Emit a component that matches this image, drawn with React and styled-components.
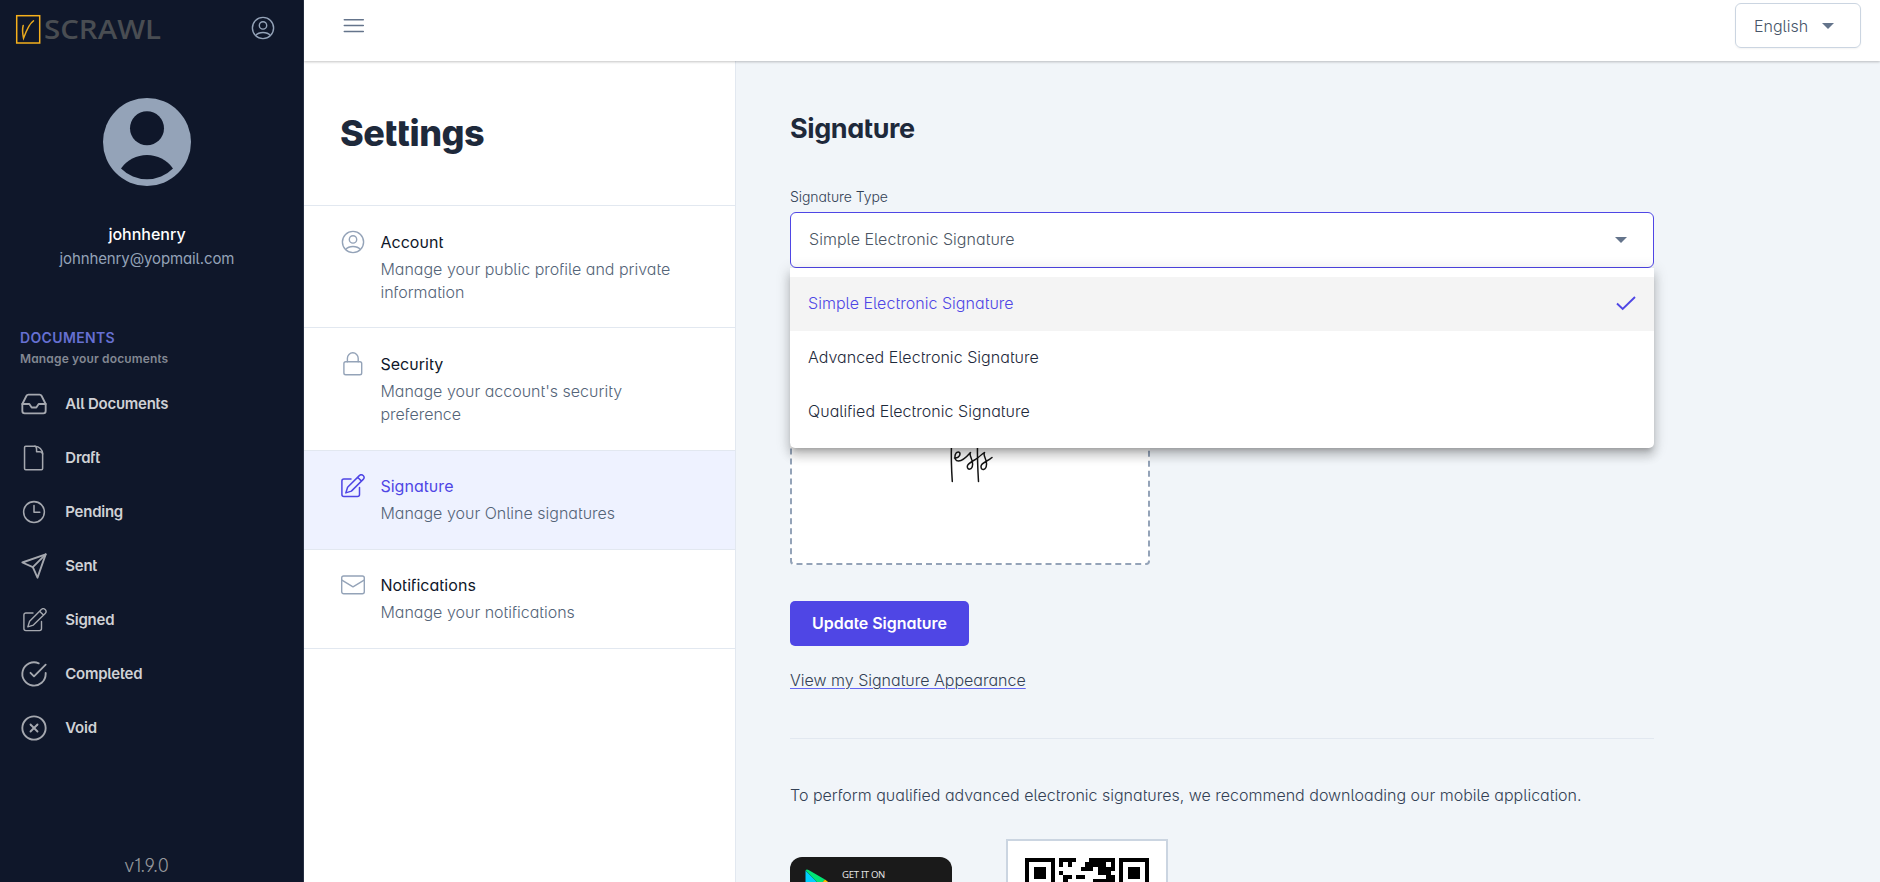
import React from "react";
import styled, { createGlobalStyle, css } from "styled-components";
import { FiInbox, FiSend, FiCheckCircle, FiXCircle } from "react-icons/fi";

const GlobalStyle = createGlobalStyle`
  *, *::before, *::after { box-sizing: border-box; }
  body {
    margin: 0;
    overflow: hidden;
    font-family: Inter, "Liberation Sans", sans-serif;
    font-feature-settings: "salt", "cv11";
    font-size: 16px;
    font-weight: 300;
    line-height: 24px;
    color: #1e293b;
    background: #f1f5f9;
  }
`;

const Layout = styled.div`
  display: flex;
  width: 100%;
  height: 882px;
  overflow: hidden;
`;

const Sidebar = styled.aside`
  display: flex;
  flex-direction: column;
  flex: 0 0 304px;
  background: #0f172a;
  border-right: 1px solid #273043;
`;

const BrandRow = styled.div`
  display: flex;
  justify-content: space-between;
  padding: 14px 28px 0 15px;
  height: 98px;
`;

const LogoMark = styled.svg`
  overflow: visible;
`;

const AccountButton = styled.span`
  padding-top: 1.5px;
  color: #94a3b8;
`;

const Profile = styled.div`
  display: flex;
  flex-direction: column;
  align-items: center;
  padding-right: 9px;
`;

const UserName = styled.div`
  margin-top: 36px;
  font-weight: 500;
  color: #ffffff;
`;

const UserEmail = styled.div`
  padding-top: 1px;
  font-size: 15px;
  line-height: 23px;
  font-weight: 400;
  letter-spacing: -0.12px;
  color: #94a3b8;
`;

const NavHeading = styled.div`
  margin: 58px 0 2px 20px;
  font-size: 14px;
  line-height: 20px;
  font-weight: 600;
  letter-spacing: 0.35px;
  color: #6670d2;
`;

const NavHint = styled.div`
  margin: 0 0 9px 20px;
  font-size: 12px;
  line-height: 18px;
  font-weight: 600;
  letter-spacing: 0.15px;
  color: #838893;
`;

const NavItem = styled.a`
  display: flex;
  align-items: center;
  height: 54px;
  padding-left: 20px;
  gap: 17.3px;
  font-size: 15px;
  font-weight: 600;
  letter-spacing: -0.25px;
  color: #cfd1d5;
  svg { color: #a5a8af; }
`;

const Version = styled.div`
  margin-top: auto;
  padding: 0 10px 4px 0;
  text-align: center;
  font-size: 18px;
  color: #96989c;
`;

const Page = styled.div`
  display: flex;
  flex-direction: column;
  flex: 1;
  min-width: 0;
`;

const TopBar = styled.header`
  position: relative;
  z-index: 1;
  display: flex;
  align-items: flex-start;
  justify-content: space-between;
  flex: 0 0 61px;
  padding: 3px 19px 0 39px;
  background: #ffffff;
  box-shadow: 0 1px 3px rgba(0, 0, 0, 0.12), 0 1px 2px rgba(0, 0, 0, 0.12);
`;

const MenuButton = styled.div`
  padding-top: 15px;
  svg { display: block; }
`;

const LanguageSelect = styled.div`
  display: flex;
  align-items: center;
  width: 126px;
  height: 45px;
  padding: 0 26px 0 18px;
  justify-content: space-between;
  border: 1px solid #cbd5e1;
  border-radius: 6px;
  color: #475569;
  box-shadow: 0 1px 2px rgba(0, 0, 0, 0.05);
`;

const Caret = styled.span`
  border-left: 6px solid transparent;
  border-right: 6px solid transparent;
  border-top: 6px solid #64748b;
`;

const Body = styled.div`
  display: flex;
  flex: 1;
  min-height: 0;
`;

const SettingsPanel = styled.section`
  flex: 0 0 432px;
  background: #ffffff;
  border-right: 1px solid #e2e8f0;
`;

const SettingsTitle = styled.h1`
  margin: 0;
  height: 144px;
  padding: 50px 0 0 36px;
  font-size: 36px;
  line-height: 44px;
  font-weight: 800;
  letter-spacing: -0.45px;
`;

const SettingsList = styled.div`
  border-bottom: 1px solid #e2e8f0;
`;

const SettingsItem = styled.div`
  display: flex;
  gap: 15px;
  padding: 23.5px 36px 22.9px 37.4px;
  border-top: 1px solid #e2e8f0;
  ${(p) => p.$active && css`background: #eef2ff;`}
  svg {
    flex: none;
    color: ${(p) => (p.$active ? "#4f46e5" : "#94a3b8")};
  }
`;

const ItemTitle = styled.div`
  margin-bottom: 4px;
  font-weight: 400;
  letter-spacing: 0.04px;
  color: ${(p) => (p.$active ? "#4f46e5" : "#0f172a")};
`;

const ItemText = styled.div`
  line-height: 23.5px;
  color: #546478;
`;

const Main = styled.main`
  flex: 1;
  min-width: 0;
  padding: 50px 0 0 54px;
`;

const Content = styled.div`
  width: 864px;
`;

const Title = styled.h2`
  margin: 0;
  font-size: 27px;
  line-height: 36px;
  font-weight: 700;
  letter-spacing: -0.42px;
`;

const FieldLabel = styled.div`
  margin-top: 40px;
  padding-bottom: 5px;
  font-size: 14px;
  line-height: 20px;
  letter-spacing: -0.07px;
  color: #334155;
`;

const SelectWrap = styled.div`
  position: relative;
`;

const SelectBox = styled.div`
  display: flex;
  align-items: center;
  justify-content: space-between;
  height: 56px;
  padding: 0 26px 0 18px;
  background: #ffffff;
  border: 1px solid #4f46e5;
  border-radius: 6px;
  color: #4b5563;
`;

const SelectValue = styled.span`
  padding-bottom: 2px;
  letter-spacing: 0.04px;
`;

const Menu = styled.div`
  position: absolute;
  z-index: 2;
  top: 56px;
  left: 0;
  right: 0;
  padding: 9px 0;
  background: #ffffff;
  border-radius: 0 0 5px 5px;
  box-shadow: 0 5px 5px -3px rgba(0, 0, 0, 0.2), 0 8px 10px 1px rgba(0, 0, 0, 0.14),
    0 3px 14px 2px rgba(0, 0, 0, 0.12);
`;

const Option = styled.div`
  display: flex;
  align-items: center;
  justify-content: space-between;
  height: 54px;
  padding: 0 18px 2px;
  letter-spacing: 0.04px;
  background: ${(p) => (p.$selected ? "#f4f4f4" : "transparent")};
  color: ${(p) => (p.$selected ? "#4f46e5" : "#1e293b")};
`;

const SignatureBox = styled.div`
  display: flex;
  justify-content: center;
  width: 360px;
  height: 180px;
  margin-top: 117px;
  padding-top: 33px;
  background: #ffffff;
  border: 2px dashed #94a3b8;
  border-radius: 4px;
`;

const UpdateButton = styled.button`
  display: block;
  width: 179px;
  height: 45px;
  margin-top: 36px;
  padding: 0 0 2px;
  border: 0;
  border-radius: 5px;
  background: #4f46e5;
  color: #ffffff;
  font: inherit;
  font-feature-settings: inherit;
  font-weight: 600;
  letter-spacing: -0.03px;
`;

const AppearanceLink = styled.a`
  display: inline-block;
  margin-top: 22px;
  color: #334155;
  text-decoration: underline;
  text-decoration-color: #6366f1;
  text-decoration-thickness: 1px;
  text-underline-offset: 2px;
`;

const Divider = styled.div`
  height: 1px;
  margin-top: 46px;
  background: #e2e8f0;
`;

const Note = styled.p`
  margin: 44px 0 0;
  color: #334155;
  white-space: nowrap;
`;

const Downloads = styled.div`
  display: flex;
  gap: 54px;
  margin-top: 32px;
`;

const StoreBadge = styled.div`
  display: flex;
  width: 162px;
  height: 49px;
  margin-top: 18px;
  padding: 12px 0 0 15px;
  gap: 10px;
  background: #1a1a1a;
  border-radius: 12px;
`;

const BadgeText = styled.div`
  color: #e8e8e8;
  font-family: "Open Sans", sans-serif;
  font-weight: 400;
  font-size: 9.6px;
  line-height: 11px;
  letter-spacing: -0.3px;
  white-space: nowrap;
`;

const BadgeName = styled.div`
  padding-left: 2px;
  font-size: 18px;
  line-height: 20px;
  letter-spacing: -0.8px;
  color: #ffffff;
`;

const QrFrame = styled.div`
  width: 162px;
  height: 162px;
  padding: 17px;
  background: #ffffff;
  border: 2px solid #cbd5e1;
`;

const Stroke = ({ size = 24, width = 1.4, children }) => (
  <svg width={size} height={size} viewBox="0 0 24 24" fill="none" stroke="currentColor"
    strokeWidth={width} strokeLinecap="round" strokeLinejoin="round">
    {children}
  </svg>
);

const UserCircle = () => (
  <Stroke>
    <circle cx="12" cy="12" r="10.6" />
    <circle cx="12" cy="9.4" r="3.7" />
    <path d="M4.7 19.4C8 15.5 16 15.5 19.3 19.4" />
  </Stroke>
);

const Lock = () => (
  <Stroke>
    <rect x="2.9" y="9.7" width="17.8" height="13" rx="1.8" />
    <path d="M6.4 9.7V6.2a5.4 5.4 0 0 1 10.8 0v3.5" />
  </Stroke>
);

const Pencil = ({ size, width = 1.5 }) => (
  <Stroke size={size} width={width}>
    <path d="M10 5H2.9A2 2 0 0 0 .9 7v13.6a2 2 0 0 0 2 2h13.6a2 2 0 0 0 2-2V13.4" />
    <path d="M18.3 1.6 6.6 13.3 4.8 18.9l5.6-1.8L22.2 5.4a2.6 2.6 0 0 0-3.9-3.8zM16.6 3.3l3.9 3.8" />
  </Stroke>
);

const Envelope = () => (
  <Stroke>
    <rect x=".7" y="3" width="22.6" height="17.8" rx="2" />
    <path d="M.9 7.2 12 13.8l11.1-6.6" />
  </Stroke>
);

const DraftPage = () => (
  <Stroke size={28} width={1.3}>
    <path d="M4.9 1.9h8c3.5 0 6.5 3 6.5 6.6v12.6a1 1 0 0 1-1 1H4.9a1 1 0 0 1-1-1V2.9a1 1 0 0 1 1-1z" />
    <path d="M12.6 1.9c1.6 0 1.6 1.2 1.6 2.6v2.2h2.2c1.8 0 3 .2 3 1.8" />
  </Stroke>
);

const Clock = () => (
  <Stroke size={28} width={1.3}>
    <circle cx="12" cy="12" r="8.9" />
    <path d="M12 6.5V12.2h5" />
  </Stroke>
);

const PencilSlot = styled.span`
  display: flex;
  width: 28px;
  padding-left: 2.6px;
`;

const Logo = () => (
  <LogoMark width="150" height="32" viewBox="0 0 150 32">
    <rect x="1.7" y="1.7" width="23" height="27.3" fill="none" stroke="#f5b01c" strokeWidth="1.5" />
    <path d="M8.2 11.5C7.2 15 7.6 20 8.5 24.2C11 17.5 14 9.5 18.5 6.8" fill="none" stroke="#e8a91e"
      strokeWidth="1.5" strokeLinecap="round" />
    <text x="29" y="25.3" fontFamily='"Open Sans", sans-serif' fontSize="27.5" fontWeight="600"
      textLength="117" lengthAdjust="spacingAndGlyphs" fill="#494d52">SCRAWL</text>
  </LogoMark>
);

const Avatar = () => (
  <svg width="88" height="88" viewBox="0 0 88 88">
    <circle cx="44" cy="44" r="44" fill="#94a3b8" />
    <circle cx="44" cy="30.3" r="17" fill="#0f172a" />
    <path d="M18 70.4A32 32 0 0 1 70 70.4A36.7 36.7 0 0 1 18 70.4Z" fill="#0f172a" />
  </svg>
);

const Scribble = () => (
  <svg width="46" height="64" viewBox="0 0 46 64" fill="none" stroke="#151515" strokeWidth="1.5"
    strokeLinecap="round" strokeLinejoin="round">
    <path d="M2 27c8-3 20-5 32-6M4.5 24C4 38 4.5 50 5.3 61.5" />
    <path d="M7.5 38C10 38.5 13 36.5 13 34C13 31.5 9.5 31 8.3 34.5C7.3 38.5 8.5 41 11.5 41C15.5 41 20 36.5 23.5 32.5C21.5 35.5 26 39 25.6 44.5C25.3 50 20.3 50.5 20.3 46.5C20.3 43 26 41.5 30.5 38C33.5 35.5 36 33.5 37.5 32.5C35.5 35.5 40 39 39.5 44.5C39.2 50.5 34 51 34 46.5C34 42.5 40 42 45 37.5" />
    <path d="M30.5 24C30.2 38 30.8 50 31.5 61.5" />
  </svg>
);

const PlayMark = () => (
  <svg width="27" height="32" viewBox="0 0 27 32">
    <path d="M.5 1.5V30L15 16z" fill="#00d0ff" />
    <path d="M.5 1.2C1.5.2 2.7.5 4 1.3L20 10.5 15 16z" fill="#00e676" />
    <path d="M20 10.5 27 16l-7 5.5L15 16z" fill="#ffc400" />
    <path d="M.5 30 15 16l5 5.5L4 30.5z" fill="#ff3a44" />
  </svg>
);

const QR_ROWS = [
  "11111110111100011111101111111",
  "10000010101000111110101000001",
  "10111010000001110111101011101",
  "10111010100000000111001011101",
  "10111010011011000001101011101",
  "10000010010000001111101000001",
  "11111110101010101010101111111",
];

const QrCode = () => (
  <svg width="124" height="124" viewBox="0 0 29 29" shapeRendering="crispEdges">
    {QR_ROWS.map((row, y) =>
      [...row].map((v, x) => v === "1" && <rect key={`${x}-${y}`} x={x} y={y} width="1" height="1" />)
    )}
  </svg>
);

const NAV = [
  ["All Documents", <FiInbox size={28} strokeWidth={1.6} />],
  ["Draft", <DraftPage />],
  ["Pending", <Clock />],
  ["Sent", <FiSend size={28} strokeWidth={1.6} />],
  ["Signed", <PencilSlot><Pencil width={1.4} /></PencilSlot>],
  ["Completed", <FiCheckCircle size={28} strokeWidth={1.6} />],
  ["Void", <FiXCircle size={28} strokeWidth={1.6} />],
];

const SETTINGS = [
  ["Account", "Manage your public profile and private information", <UserCircle />],
  ["Security", "Manage your account's security preference", <Lock />],
  ["Signature", "Manage your Online signatures", <Pencil />, true],
  ["Notifications", "Manage your notifications", <Envelope />],
];

const OPTIONS = [
  "Simple Electronic Signature",
  "Advanced Electronic Signature",
  "Qualified Electronic Signature",
];

export default function App() {
  return (
    <>
      <GlobalStyle />
      <Layout>
        <Sidebar>
          <BrandRow>
            <Logo />
            <AccountButton><UserCircle /></AccountButton>
          </BrandRow>
          <Profile>
            <Avatar />
            <UserName>johnhenry</UserName>
            <UserEmail>johnhenry@yopmail.com</UserEmail>
          </Profile>
          <NavHeading>DOCUMENTS</NavHeading>
          <NavHint>Manage your documents</NavHint>
          <nav>
            {NAV.map(([label, icon]) => (
              <NavItem key={label}>{icon}{label}</NavItem>
            ))}
          </nav>
          <Version>v1.9.0</Version>
        </Sidebar>
        <Page>
          <TopBar>
            <MenuButton>
              <svg width="22" height="16" viewBox="0 0 22 16" stroke="#64748b" strokeWidth="1.5" strokeLinecap="round">
                <path d="M1.3 1.7h19M1.3 7.6h19M1.3 13.5h19" />
              </svg>
            </MenuButton>
            <LanguageSelect>English<Caret /></LanguageSelect>
          </TopBar>
          <Body>
            <SettingsPanel>
              <SettingsTitle>Settings</SettingsTitle>
              <SettingsList>
                {SETTINGS.map(([name, text, icon, active]) => (
                  <SettingsItem key={name} $active={active}>
                    {icon}
                    <div>
                      <ItemTitle $active={active}>{name}</ItemTitle>
                      <ItemText>{text}</ItemText>
                    </div>
                  </SettingsItem>
                ))}
              </SettingsList>
            </SettingsPanel>
            <Main>
              <Content>
                <Title>Signature</Title>
                <FieldLabel>Signature Type</FieldLabel>
                <SelectWrap>
                  <SelectBox>
                    <SelectValue>{OPTIONS[0]}</SelectValue>
                    <Caret />
                  </SelectBox>
                  <Menu>
                    {OPTIONS.map((option, i) => (
                      <Option key={option} $selected={i === 0}>
                        {option}
                        {i === 0 && (
                          <svg width="20" height="15" viewBox="0 0 20 15" fill="none" stroke="#4f46e5" strokeWidth="1.9">
                            <path d="M1 7.5 6.7 13 19 1" />
                          </svg>
                        )}
                      </Option>
                    ))}
                  </Menu>
                </SelectWrap>
                <SignatureBox><Scribble /></SignatureBox>
                <UpdateButton>Update Signature</UpdateButton>
                <AppearanceLink>View my Signature Appearance</AppearanceLink>
                <Divider />
                <Note>
                  To perform qualified advanced electronic signatures, we recommend downloading our mobile application.
                </Note>
                <Downloads>
                  <StoreBadge>
                    <PlayMark />
                    <BadgeText>GET IT ON<BadgeName>Google Play</BadgeName></BadgeText>
                  </StoreBadge>
                  <QrFrame><QrCode /></QrFrame>
                </Downloads>
              </Content>
            </Main>
          </Body>
        </Page>
      </Layout>
    </>
  );
}
